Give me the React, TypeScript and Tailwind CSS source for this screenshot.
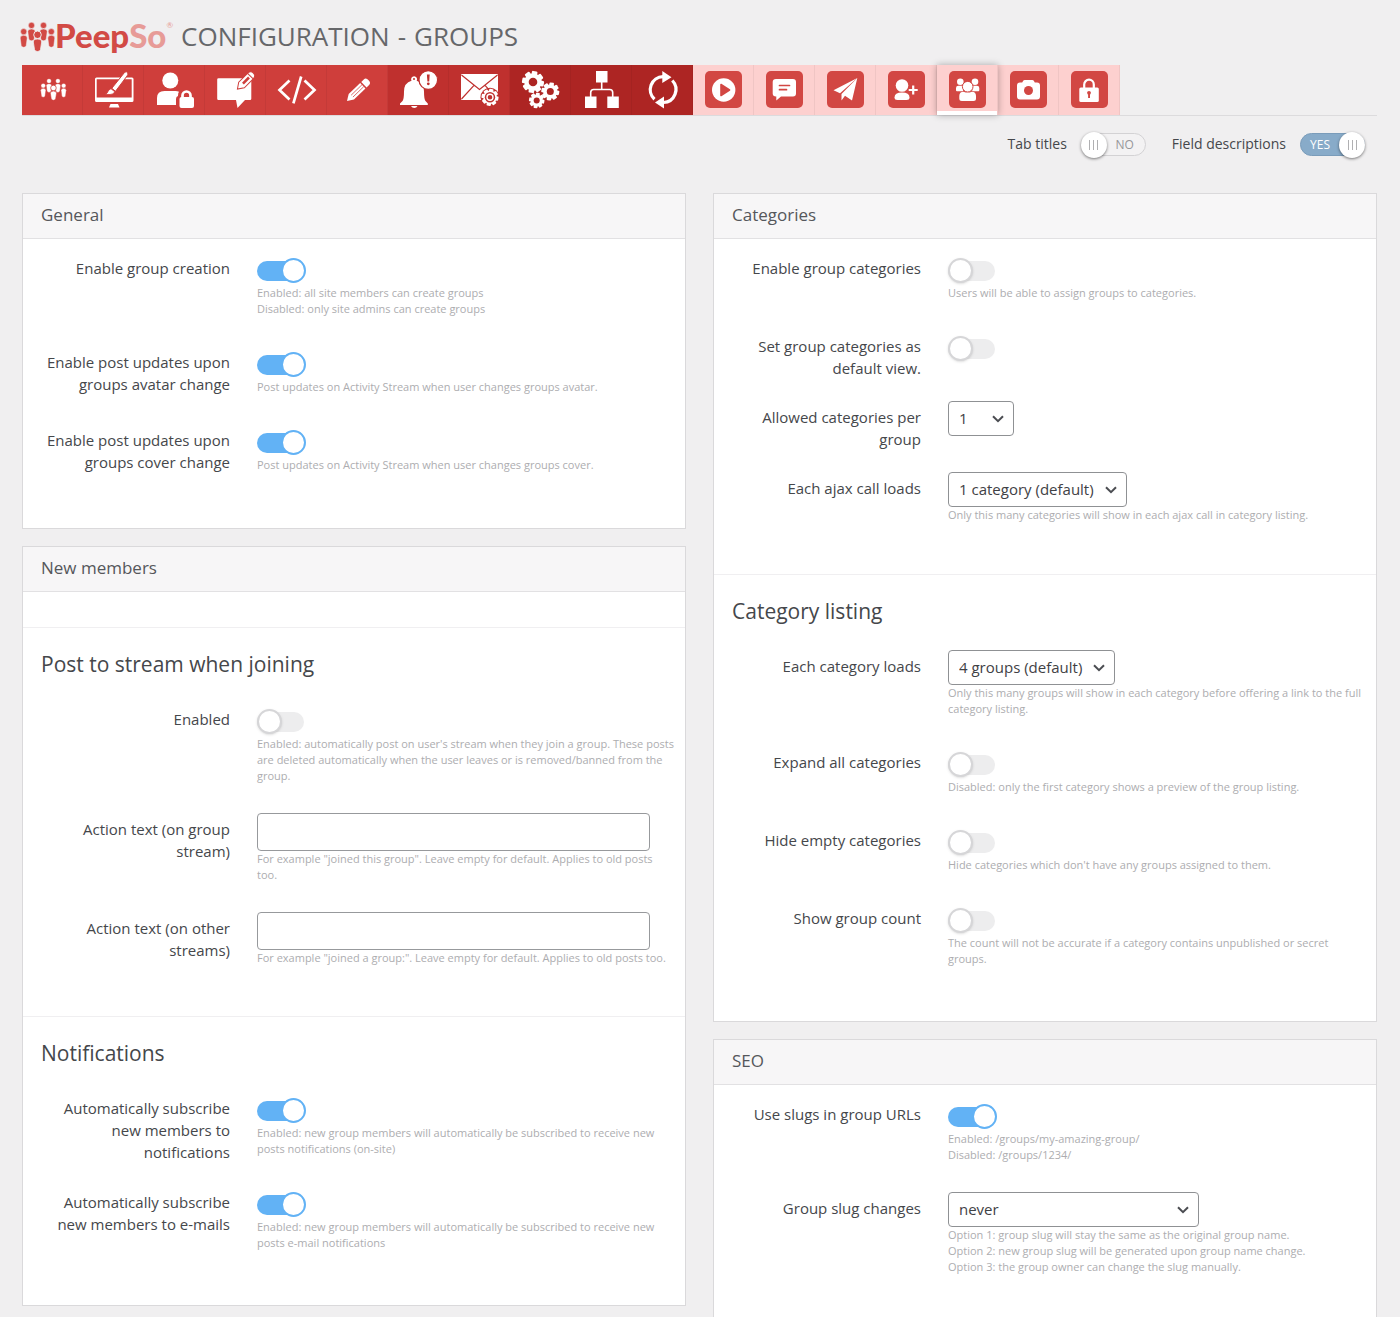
import { useId, useState } from 'react';
import type { ReactNode } from 'react';
import clsx from 'clsx';

/* ---------- Icons ---------- */

function People({ gap }: { gap: string }) {
  return (
    <g stroke={gap} strokeWidth=".5">
      <circle cx="11.5" cy="3.4" r="3.1" />
      <path d="M7.800 9.500Q7.800 7 11.500 7T15.200 9.500L14.200 17q-.3 1.800-2.700 1.800T8.800 17Z" />
      <circle cx="23.500" cy="3.400" r="3.100" />
      <path d="M19.800 9.500Q19.800 7 23.500 7T27.200 9.500L26.200 17q-.3 1.800-2.700 1.800T20.800 17Z" />
      <circle cx="3.700" cy="9.700" r="3.100" />
      <path d="M.2 16Q.2 13.300 3.700 13.300T7.200 16L6.200 23.500q-.3 1.800-2.500 1.800T1.200 23.500Z" />
      <circle cx="31.300" cy="9.700" r="3.100" />
      <path d="M27.800 16q0-2.700 3.500-2.700T34.800 16l-1 7.500q-.3 1.800-2.500 1.800t-2.500-1.800Z" />
      <circle cx="17.500" cy="12.800" r="3.800" strokeWidth="1" />
      <path d="M13.300 20q0-3 4.200-3t4.200 3l-1.200 7.500q-.3 2-3 2t-3-2Z" strokeWidth=".8" />
    </g>
  );
}

function Gear({ cx, cy, r, hole }: { cx: number; cy: number; r: number; hole: string }) {
  return (
    <g transform={`translate(${cx} ${cy}) scale(${r / 11})`}>
      {[0, 45, 90, 135].map((a) => (
        <rect key={a} x="-2.8" y="-11" width="5.6" height="22" rx="1.2" transform={`rotate(${a + 10})`} />
      ))}
      <circle r="8.700" />
      <circle r="4.300" fill={hole} />
    </g>
  );
}

const tile = <rect x="12" y="6" width="37" height="37" rx="5" fill="#d24743" />;

interface Tab {
  title: string;
  bg: string;
  icon: ReactNode;
  active?: boolean;
}

const tabs: Tab[] = [
  {
    title: 'Dashboard',
    bg: 'bg-[#cf3e3b]',
    icon: (
      <g transform="translate(18.500 13.500) scale(.74)">
        <People gap="#cf3e3b" />
      </g>
    ),
  },
  {
    title: 'Appearance',
    bg: 'bg-[#cf3e3b]',
    icon: (
      <>
        <path fillRule="evenodd" d="M13.500 12.500h35.500a1.500 1.500 0 0 1 1.500 1.500v21.500a1.500 1.500 0 0 1-1.500 1.500h-35.500a1.500 1.500 0 0 1-1.500-1.500V14a1.500 1.500 0 0 1 1.500-1.500ZM13.700 14.200v18.300h35V14.200Z" />
        <path d="M27.500 39h7.500l1.500 3.500H26Z" />
        <path stroke="#cf3e3b" strokeWidth="1" d="M41.500 7.500q1.800-1.600 3 0t-.4 3.400L32.500 26.300l-3.700-3Z" />
        <path stroke="#cf3e3b" strokeWidth=".8" d="M28 23.700l3.800 3.100q-1.400 2.900-4.800 2.700-2.500-.1-5-.2 2.500-.9 3-2.800t3-2.800Z" />
      </>
    ),
  },
  {
    title: 'Accounts',
    bg: 'bg-[#cf3e3b]',
    icon: (
      <>
        <circle cx="26.300" cy="15.500" r="8" />
        <path d="M13 40V33q0-7 7.500-7h11q2 0 3.500.8-1 1-1 4.200-2 .6-2 3V40Z" />
        <rect x="35.500" y="32" width="14.500" height="11" rx="2" />
        <path d="M38.500 33v-2.500a4 4 0 0 1 8 0V33" fill="none" stroke="#fff" strokeWidth="2.700" />
      </>
    ),
  },
  {
    title: 'Posts',
    bg: 'bg-[#cf3e3b]',
    icon: (
      <>
        <path d="M13.500 13.300h31.500q1.300 0 1.300 1.300v19.100q0 1.300-1.300 1.300H40l-7.500 8-1.500-8H13.500q-1.300 0-1.300-1.300V14.600q0-1.300 1.300-1.300Z" />
        <g transform="translate(33 23.500) rotate(-45)" stroke="#cf3e3b" strokeWidth="1">
          <path d="M-.8 0 5-4h12.500q4.300 0 4.300 4t-4.300 4H5Z" />
          <path d="M17.500-4v8" fill="none" />
          <path d="M7-1.300h8.500v2.600H7Z" fill="#cf3e3b" stroke="none" />
        </g>
      </>
    ),
  },
  {
    title: 'Code',
    bg: 'bg-[#cf3e3b]',
    icon: (
      <path d="M23.500 15.500 13.500 25l10 9.500M38.500 15.500 48.500 25l-10 9.500M35.200 11.500 27.400 38.300" fill="none" stroke="#fff" strokeWidth="2.700" />
    ),
  },
  {
    title: 'Editor',
    bg: 'bg-[#cf3e3b]',
    icon: (
      <g transform="translate(20 36) rotate(-44)">
        <path d="M0 0 6-3.800h16v7.600H6Z" />
        <path d="M23.500-3.800H27q3 0 3 3.800t-3 3.800h-3.500Z" />
        <path d="M7-1.300h15M7 1.300h15" stroke="#cf3e3b" strokeWidth=".7" />
      </g>
    ),
  },
  {
    title: 'Notifications',
    bg: 'bg-[#bf302e]',
    icon: (
      <>
        <path d="M23.500 15.800a3 3 0 1 1 5.200 0Q36 18 36 26.500q0 7.500 1.500 9.500l2.300 2.500v1.500H12v-1.500l2.500-2.500Q16 34 16 26.500q0-8.500 7.500-10.700Z" />
        <circle cx="26" cy="14" r="1" fill="#bf302e" />
        <path d="M23 41h6.500q-1 2-3.200 2T23 41Z" />
        <circle cx="40.300" cy="15" r="9.300" stroke="#bf302e" strokeWidth="1.200" />
        <path d="M38.900 9.500h2.800l-.5 7h-1.800Z" fill="#bf302e" />
        <circle cx="40.300" cy="18.800" r="1.400" fill="#bf302e" />
      </>
    ),
  },
  {
    title: 'Emails',
    bg: 'bg-[#bf302e]',
    icon: (
      <>
        <rect x="12" y="9" width="37" height="26" rx="1" />
        <path d="M12.500 10 30.500 24.500 48.500 10M12.500 34 25 20.300M48.500 34 36 20.300" fill="none" stroke="#bf302e" strokeWidth="1.200" />
        <circle cx="41" cy="32.300" r="9.500" fill="#bf302e" />
        <Gear cx={41} cy={32.3} r={8.5} hole="#bf302e" />
        <circle cx="41" cy="32.300" r="5.200" fill="#bf302e" />
        <circle cx="41" cy="32.300" r="3" fill="none" stroke="#fff" strokeWidth="1.400" />
      </>
    ),
  },
  {
    title: 'Advanced',
    bg: 'bg-[#ad2523]',
    icon: (
      <>
        <Gear cx={23} cy={17} r={11} hole="#ad2523" />
        <Gear cx={40.3} cy={26.5} r={9} hole="#ad2523" />
        <Gear cx={26.7} cy={35.5} r={7.7} hole="#ad2523" />
      </>
    ),
  },
  {
    title: 'Navigation',
    bg: 'bg-[#ad2523]',
    icon: (
      <>
        <path d="M25 6h11.500v11.500H25ZM14 31.500h11.500V43H14ZM36.300 31.500h11.500V43H36.300Z" />
        <path d="M30.700 17v8M19.700 32v-4.500q0-3 3-3h16q3 0 3 3V32" fill="none" stroke="#fff" strokeWidth="1.600" />
      </>
    ),
  },
  {
    title: 'Updates',
    bg: 'bg-[#ad2523]',
    icon: (
      <>
        <path d="M22.500 34.300A13 13 0 0 1 31 11.700M40.300 15.500A13 13 0 0 1 31.500 37.500" fill="none" stroke="#fff" strokeWidth="3.200" />
        <path d="M30.300 6 39.500 12.300 30.300 18ZM32 31.500 23 37.500 32 43.500Z" />
      </>
    ),
  },
  {
    title: 'Videos',
    bg: 'bg-[#fdd0cf]',
    icon: (
      <>
        {tile}
        <circle cx="30.700" cy="25" r="11.700" />
        <path d="M28 19.500 36.500 25 28 30.500Z" fill="#d24743" stroke="#d24743" strokeWidth="1.600" strokeLinejoin="round" />
      </>
    ),
  },
  {
    title: 'Chat',
    bg: 'bg-[#fdd0cf]',
    icon: (
      <>
        {tile}
        <path d="M22 14h17q3 0 3 3v11.500q0 3-3 3H27L22.300 35.500V31.500H22q-3.300 0-3.300-3V17q0-3 3.300-3Z" />
        <path d="M25.500 20.500h10M25.500 24.700h7" stroke="#d24743" strokeWidth="1.700" strokeLinecap="round" />
      </>
    ),
  },
  {
    title: 'Messages',
    bg: 'bg-[#fdd0cf]',
    icon: (
      <>
        {tile}
        <path d="M42.300 13 18.500 25.300l6.500 3Z" />
        <path d="M42.300 13 26.500 29v6.500l3.500-4.800 7 4.800Z" />
      </>
    ),
  },
  {
    title: 'Friends',
    bg: 'bg-[#fdd0cf]',
    icon: (
      <>
        {tile}
        <circle cx="26" cy="20.500" r="6.300" />
        <path d="M18.500 32.500q0-5 7.500-5t7.500 5q0 2.500-3 2.500h-9q-3 0-3-2.500Z" />
        <path d="M37.200 20.500v9M32.700 25h9" stroke="#fff" strokeWidth="2.200" />
      </>
    ),
  },
  {
    title: 'Groups',
    bg: 'bg-[#fdd0cf]',
    active: true,
    icon: (
      <>
        {tile}
        <circle cx="23.300" cy="16.800" r="3.300" />
        <circle cx="38" cy="16.800" r="3.300" />
        <path d="M19 23q0-2.300 2.500-2.300H26v5.500h-6q-1 0-1-1ZM42.300 23q0-2.300-2.500-2.300h-4.500v5.500h6q1 0 1-1Z" />
        <circle cx="30.700" cy="21.700" r="5.300" stroke="#d24743" strokeWidth="1" />
        <path d="M22.300 31q0-4.300 4.300-4.300 4 1.700 8.200 0 4.200 0 4.200 4.300v2.500q0 2.500-2.500 2.500h-11.700q-2.500 0-2.500-2.500Z" />
      </>
    ),
  },
  {
    title: 'Photos',
    bg: 'bg-[#fdd0cf]',
    icon: (
      <>
        {tile}
        <path d="M22 17.500h2.200l1-1.700q.5-.8 1.500-.8h7.600q1 0 1.500.8l1 1.700H39q3 0 3 3V31.500q0 3-3 3H22q-3 0-3-3V20.500q0-3 3-3Z" />
        <circle cx="30.500" cy="25.500" r="4.500" fill="#d24743" />
      </>
    ),
  },
  {
    title: 'Privacy',
    bg: 'bg-[#fdd0cf]',
    icon: (
      <>
        {tile}
        <rect x="20.300" y="22.500" width="19.500" height="14.500" rx="1.500" />
        <path d="M25.200 23v-3.500a4.800 4.800 0 0 1 9.600 0V23" fill="none" stroke="#fff" strokeWidth="2.200" />
        <circle cx="30" cy="27.800" r="1.900" fill="#d24743" />
        <path d="M29.100 28h1.900v5h-1.900Z" fill="#d24743" />
      </>
    ),
  },
];

/* ---------- Form parts ---------- */

function Toggle({ id, on = false }: { id: string; on?: boolean }) {
  const [checked, setChecked] = useState(on);
  return (
    <span className="relative flex h-[33px] w-[49px] items-center pt-1">
      <input
        id={id}
        type="checkbox"
        role="switch"
        checked={checked}
        onChange={(e) => setChecked(e.target.checked)}
        className="h-5 w-[47px] cursor-pointer appearance-none rounded-full bg-[#ededee] checked:bg-[#62b2f5]"
      />
      <span
        className={clsx(
          'pointer-events-none absolute size-[25px] rounded-full border-2 bg-white',
          checked ? 'right-0 border-[#62b2f5]' : 'left-0 border-[#d6d6d8] shadow-sm',
        )}
      />
    </span>
  );
}

function Select({ id, width, options }: { id: string; width: string; options: string[] }) {
  return (
    <span className={clsx('relative flex max-w-full', width)}>
      <select
        id={id}
        className="h-[35px] w-full appearance-none rounded border border-[#8f9194] bg-white pl-2.5 pr-7 text-[15px] text-[#3f4145]"
      >
        {options.map((o) => (
          <option key={o}>{o}</option>
        ))}
      </select>
      <svg viewBox="0 0 12 8" className="pointer-events-none absolute right-2.5 top-3.5 h-2 w-3" fill="none" stroke="#4b4d52" strokeWidth="2">
        <path d="M1 1.200 6 6.200l5-5" />
      </svg>
    </span>
  );
}

interface FieldProps {
  label: string;
  hint?: string[];
  children: (id: string) => ReactNode;
}

function Field({ label, hint, children }: FieldProps) {
  const id = useId();
  return (
    <div className="flex gap-[27px] pb-[22px] pl-4 pr-2.5">
      <label htmlFor={id} className="w-[191px] shrink-0 pt-[5px] text-right text-[15px] leading-[22px] text-[#45474b]">
        {label}
      </label>
      <div className="min-w-0 flex-1">
        {children(id)}
        {hint && (
          <div className="pb-[7px] text-[11px] leading-4 text-[#adadb0]">
            {hint.map((line) => (
              <p key={line}>{line}</p>
            ))}
          </div>
        )}
      </div>
    </div>
  );
}

interface SwitchFieldProps {
  label: string;
  hint?: string[];
  on?: boolean;
}

function SwitchField({ label, hint, on }: SwitchFieldProps) {
  return (
    <Field label={label} hint={hint}>
      {(id) => <Toggle id={id} on={on} />}
    </Field>
  );
}

function TextField({ label, hint }: { label: string; hint: string[] }) {
  return (
    <Field label={label} hint={hint}>
      {(id) => <input id={id} type="text" className="block h-[38px] w-[94%] rounded border border-[#97999c] bg-white px-2.5 text-[15px]" />}
    </Field>
  );
}

function Panel({ title, children }: { title: string; children: ReactNode }) {
  return (
    <section className="border border-[#dad9db] bg-white pb-1">
      <h2 className="flex h-[45px] items-center border-b border-[#e2e1e3] bg-[#f7f6f7] px-[18px] pb-0.5 text-[17px] text-[#55575b]">{title}</h2>
      {children}
    </section>
  );
}

function Group({ title, children }: { title: string; children: ReactNode }) {
  return (
    <div className="border-t border-[#f0eff1] pb-[21px] pt-[22px]">
      <h3 className="mb-[25px] px-[18px] text-[21px] leading-7 text-[#45474b]">{title}</h3>
      {children}
    </div>
  );
}

function ViewSwitch({ label, on = false }: { label: string; on?: boolean }) {
  const id = useId();
  const [checked, setChecked] = useState(on);
  return (
    <div className="flex items-center gap-3.5">
      <label htmlFor={id} className="pb-0.5 text-sm text-[#45474b]">
        {label}
      </label>
      <span className="relative flex h-[27px] w-[65px] items-center">
        <input
          id={id}
          type="checkbox"
          role="switch"
          checked={checked}
          onChange={(e) => setChecked(e.target.checked)}
          className="h-[23px] w-full cursor-pointer appearance-none rounded-full border border-[#d3d2d4] bg-[#f3f2f3] checked:border-[#7a9cba] checked:bg-[#88abc9]"
        />
        <span
          className={clsx(
            'pointer-events-none absolute text-xs',
            checked ? 'left-2.5 text-white' : 'right-3 text-[#97979a]',
          )}
        >
          {checked ? 'YES' : 'NO'}
        </span>
        <span
          className={clsx(
            'pointer-events-none absolute flex size-[26px] items-center justify-center gap-[3px] rounded-full bg-white shadow-[0_1px_3px_rgba(0,0,0,.5)]',
            checked ? 'right-0' : 'left-0',
          )}
        >
          <i className="h-2.5 w-px bg-[#b0b0b2]" />
          <i className="h-2.5 w-px bg-[#b0b0b2]" />
          <i className="h-2.5 w-px bg-[#b0b0b2]" />
        </span>
      </span>
    </div>
  );
}

/* ---------- Page ---------- */

export default function App() {
  return (
    <div className="h-screen overflow-hidden bg-[#f0eff0] pl-[22px] pr-[23px] font-['Open_Sans','Noto_Sans',sans-serif]">
      <header className="flex h-[65px] items-center gap-2 pt-2">
        <a href="#" aria-label="PeepSo" className="-ml-0.5 flex items-center">
          <svg viewBox="0 0 35 30" className="h-[30px] w-[35px]" fill="#d24a45">
            <People gap="#f0eff0" />
          </svg>
          <span className="flex pb-1 font-['Lato',sans-serif] text-[33px] font-black leading-9 text-[#d24a45]">
            Peep<span className="text-[#e79b97]">So</span>
            <sup className="text-[8px] font-normal leading-6 text-[#e79b97]">®</sup>
          </span>
        </a>
        <h1 className="flex gap-2 pb-0.5 text-[26px] leading-8 text-[#66676a]">
          <span>CONFIGURATION</span>
          <span>-</span>
          <span>GROUPS</span>
        </h1>
      </header>

      <nav className="flex border-b border-[#dcdbdd]">
        {tabs.map((tab) => (
          <a
            key={tab.title}
            href="#"
            title={tab.title}
            aria-label={tab.title}
            className={clsx(
              'block h-[50px] w-[61px] shrink-0 border-r border-black/5',
              tab.bg,
              tab.active && 'relative shadow-[inset_0_-4px_0_#fff,0_0_7px_rgba(0,0,0,.3)]',
            )}
          >
            <svg viewBox="0 0 61 50" className="h-[50px] w-[61px]" fill="#fff">
              {tab.icon}
            </svg>
          </a>
        ))}
      </nav>

      <div className="flex h-[77px] justify-end gap-[26px] pr-3 pt-[15px]">
        <div className="h-7">
          <ViewSwitch label="Tab titles" />
        </div>
        <div className="h-7">
          <ViewSwitch label="Field descriptions" on />
        </div>
      </div>

      <main className="grid grid-cols-2 items-start gap-[27px]">
        <div className="flex flex-col gap-[17px]">
          <Panel title="General">
            <div className="pb-[22px] pt-[13px]">
              <SwitchField
                on
                label="Enable group creation"
                hint={['Enabled: all site members can create groups', 'Disabled: only site admins can create groups']}
              />
              <SwitchField
                on
                label="Enable post updates upon groups avatar change"
                hint={['Post updates on Activity Stream when user changes groups avatar.']}
              />
              <SwitchField
                on
                label="Enable post updates upon groups cover change"
                hint={['Post updates on Activity Stream when user changes groups cover.']}
              />
            </div>
          </Panel>

          <Panel title="New members">
            <div className="h-[35px]" />
            <Group title="Post to stream when joining">
              <SwitchField
                label="Enabled"
                hint={[
                  "Enabled: automatically post on user's stream when they join a group. These posts are deleted automatically when the user leaves or is removed/banned from the group.",
                ]}
              />
              <TextField
                label="Action text (on group stream)"
                hint={['For example "joined this group". Leave empty for default. Applies to old posts too.']}
              />
              <TextField
                label="Action text (on other streams)"
                hint={['For example "joined a group:". Leave empty for default. Applies to old posts too.']}
              />
            </Group>
            <Group title="Notifications">
              <SwitchField
                on
                label="Automatically subscribe new members to notifications"
                hint={['Enabled: new group members will automatically be subscribed to receive new posts notifications (on-site)']}
              />
              <SwitchField
                on
                label="Automatically subscribe new members to e-mails"
                hint={['Enabled: new group members will automatically be subscribed to receive new posts e-mail notifications']}
              />
            </Group>
          </Panel>
        </div>

        <div className="flex flex-col gap-[17px]">
          <Panel title="Categories">
            <div className="pb-[22px] pt-[13px]">
              <SwitchField label="Enable group categories" hint={['Users will be able to assign groups to categories.']} />
              <SwitchField label="Set group categories as default view." />
              <Field label="Allowed categories per group">
                {(id) => <Select id={id} width="w-[66px]" options={['1', '2', '3', '4', '5']} />}
              </Field>
              <Field label="Each ajax call loads" hint={['Only this many categories will show in each ajax call in category listing.']}>
                {(id) => <Select id={id} width="w-[179px]" options={['1 category (default)', '2 categories']} />}
              </Field>
            </div>
            <Group title="Category listing">
              <Field
                label="Each category loads"
                hint={['Only this many groups will show in each category before offering a link to the full category listing.']}
              >
                {(id) => <Select id={id} width="w-[167px]" options={['4 groups (default)', '8 groups']} />}
              </Field>
              <SwitchField
                label="Expand all categories"
                hint={['Disabled: only the first category shows a preview of the group listing.']}
              />
              <SwitchField label="Hide empty categories" hint={["Hide categories which don't have any groups assigned to them."]} />
              <SwitchField
                label="Show group count"
                hint={['The count will not be accurate if a category contains unpublished or secret groups.']}
              />
            </Group>
          </Panel>

          <Panel title="SEO">
            <div className="pb-[22px] pt-[13px]">
              <SwitchField
                on
                label="Use slugs in group URLs"
                hint={['Enabled: /groups/my-amazing-group/', 'Disabled: /groups/1234/']}
              />
              <Field
                label="Group slug changes"
                hint={[
                  'Option 1: group slug will stay the same as the original group name.',
                  'Option 2: new group slug will be generated upon group name change.',
                  'Option 3: the group owner can change the slug manually.',
                ]}
              >
                {(id) => <Select id={id} width="w-[251px]" options={['never', 'automatic', 'manual']} />}
              </Field>
            </div>
          </Panel>
        </div>
      </main>
    </div>
  );
}
